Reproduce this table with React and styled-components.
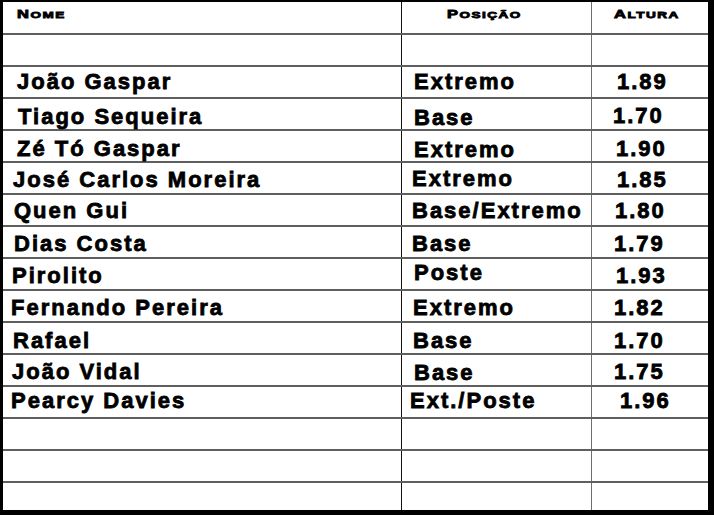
import React from "react";
import styled, { createGlobalStyle } from "styled-components";

const Global = createGlobalStyle`
  html, body { margin: 0; padding: 0; background: #fff; }
  body { font-family: "Liberation Sans", Arial, sans-serif; }
`;

const Sheet = styled.div`
  width: 714px;
  height: 515px;
  box-sizing: border-box;
  border-style: solid;
  border-color: #000;
  border-width: 2px 6px 5px 3px;
  background: #fff;
  display: flex;
  flex-direction: column;
  overflow: hidden;
`;

const Row = styled.div`
  display: grid;
  grid-template-columns: 399px 190px 1fr;
  height: ${(p) => p.$h}px;
  flex: none;
  box-sizing: content-box;
  border-bottom: ${(p) => (p.$last ? "none" : "2px solid #5f5f5f")};
`;

const Cell = styled.div`
  box-sizing: border-box;
  height: 100%;
  padding-left: ${(p) => p.$pl || 0}px;
  padding-top: ${(p) => p.$pt || 0}px;
  border-right: ${(p) =>
    p.$line === "dark" ? "1px solid #111" : p.$line === "gray" ? "1px solid #6e6e6e" : "none"};
  white-space: nowrap;
  overflow: visible;
`;

const Value = styled.span`
  display: block;
  font-family: "Liberation Sans", Arial, sans-serif;
  font-weight: 700;
  font-size: 22px;
  line-height: 22px;
  letter-spacing: 2px;
  color: #000;
  -webkit-text-stroke: 0.8px #000;
`;

const Label = styled.span`
  display: inline-block;
  font-family: "Liberation Sans", Arial, sans-serif;
  font-weight: 700;
  font-size: 9px;
  line-height: 12px;
  letter-spacing: 1px;
  text-transform: uppercase;
  color: #000;
  transform: scaleX(1.5);
  transform-origin: left center;
  -webkit-text-stroke: 0.8px #000;
`;

const Initial = styled.span`
  font-size: 11px;
`;

const players = [
  ["João Gaspar", 17, 90, "Extremo", 414, 90, "1.89", 617, 90],
  ["Tiago Sequeira", 18, 125, "Base", 414, 126, "1.70", 613, 124],
  ["Zé Tó Gaspar", 17, 157, "Extremo", 414, 158, "1.90", 616, 157],
  ["José Carlos Moreira", 13, 188, "Extremo", 412, 187, "1.85", 617, 188],
  ["Quen Gui", 14, 219, "Base/Extremo", 412, 219, "1.80", 615, 219],
  ["Dias Costa", 14, 252, "Base", 412, 252, "1.79", 614, 252],
  ["Pirolito", 12, 284, "Poste", 414, 281, "1.93", 616, 284],
  ["Fernando Pereira", 11, 316, "Extremo", 413, 316, "1.82", 614, 316],
  ["Rafael", 13, 349, "Base", 413, 349, "1.70", 614, 349],
  ["João Vidal", 12, 380, "Base", 414, 381, "1.75", 614, 380],
  ["Pearcy Davies", 11, 409, "Ext./Poste", 410, 409, "1.96", 620, 409],
];

const COL_X = [3, 402, 592];
const ASC = 18.6;

function HeadLabel({ text }) {
  return (
    <Label>
      <Initial>{text[0]}</Initial>
      {text.slice(1)}
    </Label>
  );
}

function BlankRow({ last, h = 30 }) {
  return (
    <Row $h={h} $last={last}>
      <Cell $line="dark" />
      <Cell $line="gray" />
      <Cell />
    </Row>
  );
}

export default function App() {
  return (
    <>
      <Global />
      <Sheet>
        <Row $h={31}>
          <Cell $line="dark" $pl={14} $pt={2}>
            <HeadLabel text="Nome" />
          </Cell>
          <Cell $line="gray" $pl={45} $pt={2}>
            <HeadLabel text="Posição" />
          </Cell>
          <Cell $pl={22} $pt={2}>
            <HeadLabel text="Altura" />
          </Cell>
        </Row>
        <BlankRow />
        {players.map((p, i) => {
          const top = 67 + 32 * i;
          const pt = (b) => Math.round(b - top - ASC);
          return (
            <Row key={i} $h={30}>
              <Cell $line="dark" $pl={p[1] - COL_X[0]} $pt={pt(p[2])}>
                <Value>{p[0]}</Value>
              </Cell>
              <Cell $line="gray" $pl={p[4] - COL_X[1]} $pt={pt(p[5])}>
                <Value>{p[3]}</Value>
              </Cell>
              <Cell $pl={p[7] - COL_X[2]} $pt={pt(p[8])}>
                <Value>{p[6]}</Value>
              </Cell>
            </Row>
          );
        })}
        <BlankRow />
        <BlankRow />
        <BlankRow h={27} last />
      </Sheet>
    </>
  );
}
